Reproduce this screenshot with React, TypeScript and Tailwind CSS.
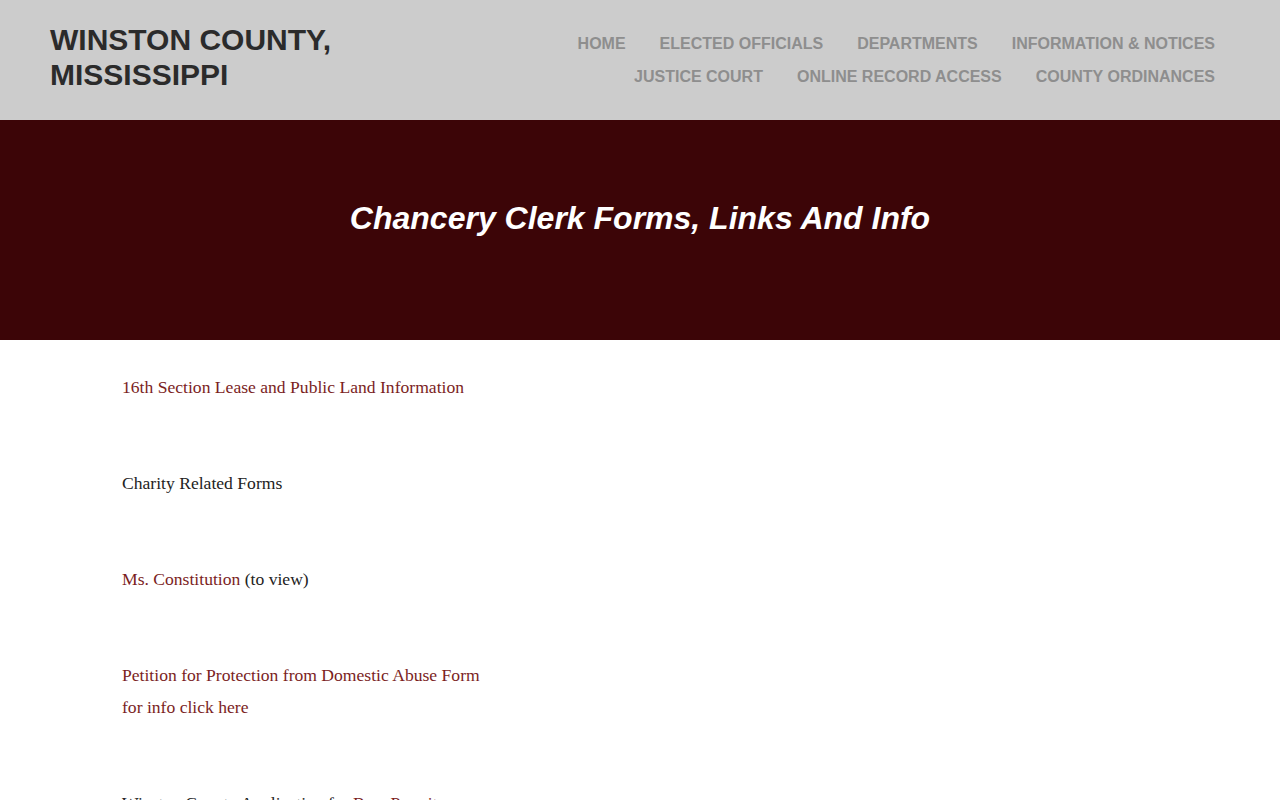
const navRow1 = ["HOME", "ELECTED OFFICIALS", "DEPARTMENTS", "INFORMATION & NOTICES"];
const navRow2 = ["JUSTICE COURT", "ONLINE RECORD ACCESS", "COUNTY ORDINANCES"];

function Header() {
  return (
    <header className="bg-[#cccccc] h-[120px] flex justify-between px-[50px] pt-[22px] [font-family:'Liberation_Sans',Arial,sans-serif]">
      <div className="text-[30px] font-bold leading-[35px] text-[#2b2b2b]">
        WINSTON COUNTY,
        <br />
        MISSISSIPPI
      </div>
      <nav className="flex flex-col items-end pr-[15px] pt-[12px] gap-[14px]">
        <ul className="flex gap-[34px] text-[16px] font-bold leading-[19px] text-[#8e8e8e]">
          {navRow1.map((n) => (
            <li key={n}>{n}</li>
          ))}
        </ul>
        <ul className="flex gap-[34px] text-[16px] font-bold leading-[19px] text-[#8e8e8e]">
          {navRow2.map((n) => (
            <li key={n}>{n}</li>
          ))}
        </ul>
      </nav>
    </header>
  );
}

function Hero() {
  return (
    <section className="bg-[#3c0507] h-[220px] flex justify-center pt-[78px]">
      <h1 className="text-white italic font-bold text-[32px] leading-[40px] [font-family:'Liberation_Sans',Arial,sans-serif]">
        Chancery Clerk Forms, Links And Info
      </h1>
    </section>
  );
}

export default function App() {
  return (
    <div className="min-h-screen bg-white">
      <Header />
      <Hero />
      <main className="px-[122px] pt-[31px] text-[17.6px] leading-[32px] text-[#222222] [font-family:'Liberation_Serif','Times_New_Roman',serif]">
        <p className="mb-[64px]">
          <a className="text-[#7b1e1e]">16th Section Lease and Public Land Information</a>
        </p>
        <p className="mb-[64px]">Charity Related Forms</p>
        <p className="mb-[64px]">
          <a className="text-[#7b1e1e]">Ms. Constitution</a> (to view)
        </p>
        <p className="mb-[64px]">
          <a className="text-[#7b1e1e]">Petition for Protection from Domestic Abuse Form</a>
          <br />
          <a className="text-[#7b1e1e]">for info click here</a>
        </p>
        <p className="mb-[64px]">
          Winston County Application for <a className="text-[#7b1e1e]">Beer Permit</a>
        </p>
      </main>
    </div>
  );
}
